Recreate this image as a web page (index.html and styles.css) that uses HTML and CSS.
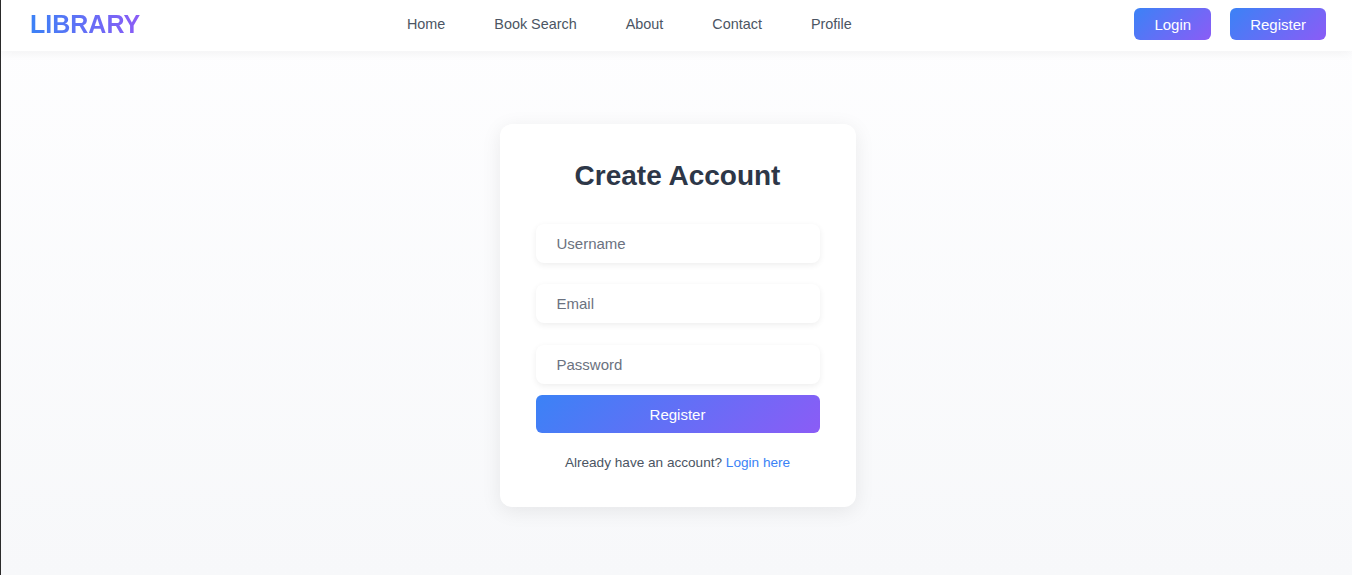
FILE: index.html
```html
<!DOCTYPE html>
<html>
<head>
    <title>Library - Register</title>
    <link rel="stylesheet" href="styles.css">
</head>
<body>
    <div class="page">
        <nav class="navbar">
            <a href="#" class="logo">LIBRARY</a>
            <div class="nav-links">
                <a href="#">Home</a>
                <a href="#">Book Search</a>
                <a href="#">About</a>
                <a href="#">Contact</a>
                <a href="#">Profile</a>
            </div>
            <div class="nav-buttons">
                <button class="btn-nav">Login</button>
                <button class="btn-nav">Register</button>
            </div>
        </nav>

        <main class="main">
            <div class="auth-card">
                <h2>Create Account</h2>
                <form class="auth-form" onsubmit="return false;">
                    <input type="text" class="field" placeholder="Username">
                    <input type="email" class="field" placeholder="Email">
                    <input type="password" class="field field-last" placeholder="Password">
                    <button type="submit" class="btn-submit">Register</button>
                </form>
                <p class="switch-text">Already have an account? <a href="#">Login here</a></p>
            </div>
        </main>
    </div>
</body>
</html>
```

FILE: styles.css
```css
* {
    box-sizing: border-box;
}
body {
    margin: 0;
    font-family: "Liberation Sans", Arial, sans-serif;
    color: #2d3748;
}
.page {
    min-height: 100vh;
    border-left: 1px solid #2b2b2b;
    background: linear-gradient(180deg, #fefeff 0%, #f7f8fa 100%);
}
.navbar {
    display: flex;
    justify-content: space-between;
    align-items: center;
    height: 51px;
    padding: 0 26px 3px 29px;
    background: #fff;
    box-shadow: 0 2px 10px rgba(0, 0, 0, 0.05);
}
.logo {
    font-size: 25px;
    font-weight: bold;
    text-decoration: none;
    background: linear-gradient(90deg, #3b82f6, #8b5cf6);
    -webkit-background-clip: text;
    background-clip: text;
    color: transparent;
}
.nav-links {
    display: flex;
    gap: 49px;
    margin-left: -16px;
}
.nav-links a {
    font-size: 14.4px;
    color: #4b5563;
    text-decoration: none;
}
.nav-buttons {
    display: flex;
    gap: 19px;
}
.btn-nav {
    height: 32px;
    padding: 0 20px;
    border: none;
    border-radius: 6px;
    font-family: inherit;
    font-size: 15px;
    color: #fff;
    background: linear-gradient(135deg, #3b82f6, #8b5cf6);
    cursor: pointer;
}
.main {
    display: flex;
    justify-content: center;
    padding: 73px 0 0 2px;
}
.auth-card {
    width: 356px;
    padding: 36px 36px 37px;
    background: #fff;
    border-radius: 12px;
    box-shadow: 0 4px 20px rgba(0, 0, 0, 0.08);
    text-align: center;
}
.auth-card h2 {
    margin: 0 0 32px;
    font-size: 28px;
    line-height: 32px;
    color: #2d3748;
}
.auth-form {
    display: flex;
    flex-direction: column;
}
.field {
    height: 39px;
    margin-bottom: 21px;
    padding: 0 21px;
    border: none;
    border-radius: 8px;
    background: #fff;
    box-shadow: 0 2px 6px rgba(0, 0, 0, 0.07);
    font-family: inherit;
    font-size: 15px;
    color: #374151;
    outline: none;
}
.field:nth-child(2) {
    margin-bottom: 22px;
}
.field::placeholder {
    color: #6b7280;
}
.field-last {
    margin-bottom: 11px;
}
.btn-submit {
    height: 38px;
    border: none;
    border-radius: 6px;
    font-family: inherit;
    font-size: 15px;
    color: #fff;
    background: linear-gradient(135deg, #3b82f6, #8b5cf6);
    cursor: pointer;
}
.switch-text {
    margin: 22px 0 0;
    font-size: 13.6px;
    color: #4b5563;
}
.switch-text a {
    color: #3b82f6;
    text-decoration: none;
}
```
